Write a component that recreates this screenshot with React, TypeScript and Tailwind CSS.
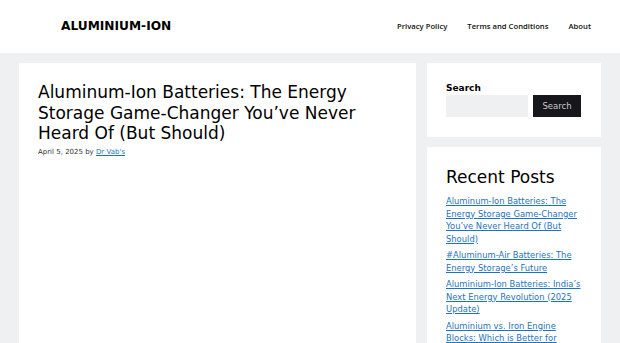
import React from 'react';

const posts = [
  'Aluminum-Ion Batteries: The Energy Storage Game-Changer You’ve Never Heard Of (But Should)',
  '#Aluminum-Air Batteries: The Energy Storage’s Future',
  'Aluminium-Ion Batteries: India’s Next Energy Revolution (2025 Update)',
  'Aluminium vs. Iron Engine Blocks: Which is Better for Performance?',
];

const App: React.FC = () => {
  return (
    <div className="h-screen overflow-hidden bg-[#eef0f2] font-['DejaVu_Sans',sans-serif] text-[#222]">
      <header className="h-[53px] bg-white flex items-center justify-between pl-[61px] pr-[29px]">
        <div className="text-[12.2px] font-bold text-black">ALUMINIUM-ION</div>
        <nav className="flex items-center gap-[20px] text-[7.7px] font-semibold font-['Open_Sans',sans-serif] text-[#111]">
          <a>Privacy Policy</a>
          <a>Terms and Conditions</a>
          <a>About</a>
        </nav>
      </header>

      <div className="flex gap-[11px] px-[19px] pt-[10px]">
        <main className="flex-1 bg-white h-[290px] px-[19px] pt-[19px]">
          <h1 className="text-[17px] leading-[20.5px] text-black">
            Aluminum-Ion Batteries: The Energy Storage Game-Changer You’ve Never Heard Of (But Should)
          </h1>
          <div className="mt-[3px] text-[7px] text-[#333]">
            April 5, 2025 by <a className="text-[#1e73be] underline">Dr Vab's</a>
          </div>
        </main>

        <aside className="w-[174px] flex flex-col gap-[10px]">
          <section className="bg-white px-[19px] pt-[19px] pb-[20px]">
            <div className="text-[9px] font-bold text-black leading-[12px]">Search</div>
            <div className="flex gap-[5px] mt-[1px]">
              <div className="w-[82px] h-[22px] bg-[#eef0f2]" />
              <button className="w-[48px] h-[22px] bg-[#17161b] text-[#c8c8c8] text-[8.5px]">Search</button>
            </div>
          </section>

          <section className="bg-white px-[19px] pt-[20px] pb-[20px] h-[300px]">
            <h2 className="text-[17px] leading-[20px] text-black mb-[8px]">Recent Posts</h2>
            <ul className="flex flex-col gap-[4px]">
              {posts.map((p) => (
                <li key={p} className="text-[8.4px] leading-[12.5px]">
                  <a className="text-[#1e73be] underline">{p}</a>
                </li>
              ))}
            </ul>
          </section>
        </aside>
      </div>
    </div>
  );
};

export default App;
